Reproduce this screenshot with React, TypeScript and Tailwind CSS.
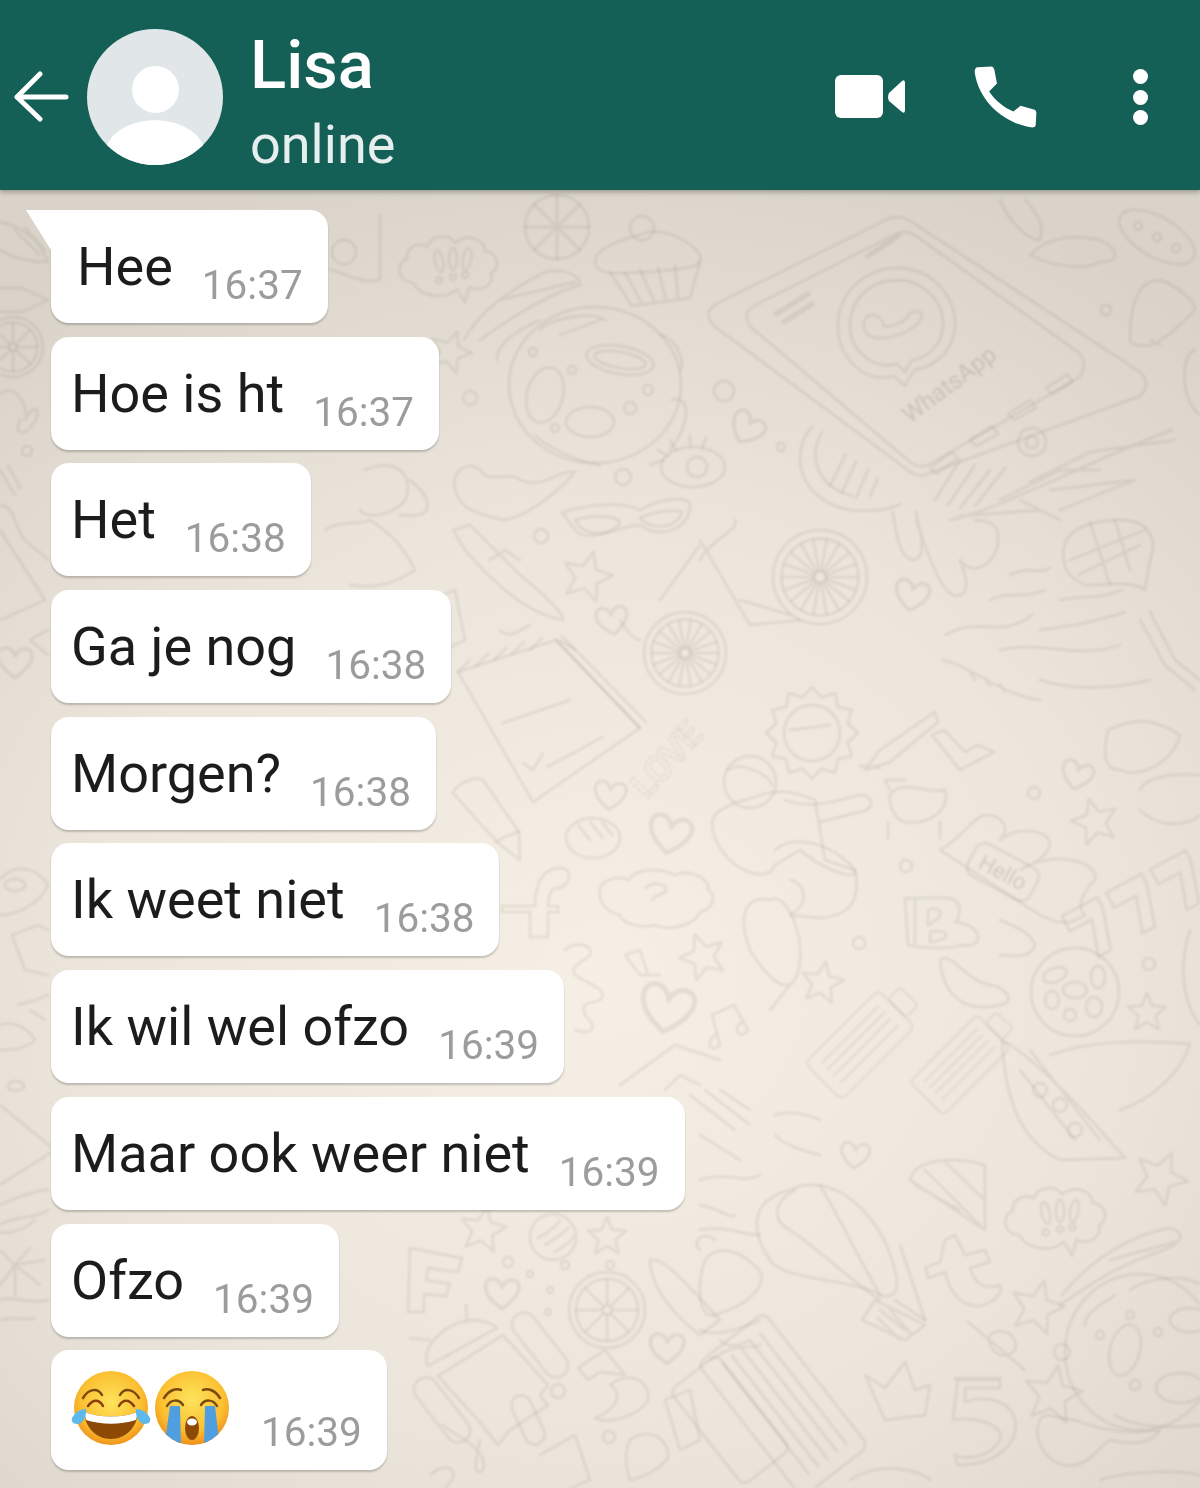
const messages = [
  { text: 'Hee', time: '16:37', pl: 'pl-[26px] rounded-tl-none' },
  { text: 'Hoe is ht', time: '16:37', pl: 'pl-[20px]' },
  { text: 'Het', time: '16:38', pl: 'pl-[20px]' },
  { text: 'Ga je nog', time: '16:38', pl: 'pl-[20px]' },
  { text: 'Morgen?', time: '16:38', pl: 'pl-[20px]' },
  { text: 'Ik weet niet', time: '16:38', pl: 'pl-[20px]' },
  { text: 'Ik wil wel ofzo', time: '16:39', pl: 'pl-[20px]' },
  { text: 'Maar ook weer niet', time: '16:39', pl: 'pl-[20px]' },
  { text: 'Ofzo', time: '16:39', pl: 'pl-[20px]' },
];

function Star({ x, y, r, rot = 0, n = 5, inner = 0.45 }: { x: number; y: number; r: number; rot?: number; n?: number; inner?: number }) {
  const pts = Array.from({ length: n * 2 }, (_, i) => {
    const a = ((i * (180 / n) + rot - 90) * Math.PI) / 180;
    const d = i % 2 ? r * inner : r;
    return `${(x + Math.cos(a) * d).toFixed(1)},${(y + Math.sin(a) * d).toFixed(1)}`;
  });
  return <polygon points={pts.join(' ')} strokeLinejoin="round" />;
}

function Heart({ x, y, s = 1, rot = 0 }: { x: number; y: number; s?: number; rot?: number }) {
  return (
    <path
      transform={`translate(${x} ${y}) rotate(${rot}) scale(${s})`}
      d="M0 12C-18 0-14-12-6-11-2-10 0-6 0-4 1-7 4-11 9-10 16-8 15 2 0 12Z"
    />
  );
}

function Wheel({ x, y, r, n = 16 }: { x: number; y: number; r: number; n?: number }) {
  return (
    <g>
      <circle cx={x} cy={y} r={r} />
      <circle cx={x} cy={y} r={r * 0.82} />
      <circle cx={x} cy={y} r={r * 0.12} />
      {Array.from({ length: n }, (_, i) => {
        const a = (i * 2 * Math.PI) / n;
        return (
          <line
            key={i}
            x1={x + Math.cos(a) * r * 0.14}
            y1={y + Math.sin(a) * r * 0.14}
            x2={x + Math.cos(a) * r * 0.8}
            y2={y + Math.sin(a) * r * 0.8}
          />
        );
      })}
    </g>
  );
}

function Cloud({ x, y, s = 1 }: { x: number; y: number; s?: number }) {
  return (
    <g transform={`translate(${x} ${y}) scale(${s})`}>
      <path d="M-40 20C-56 18-58 0-46-4-48-16-32-22-26-16-22-28-4-30 2-20 14-30 32-24 32-12 46-10 48 6 38 10 42 24 24 30 16 24L12 40 4 26C-6 36-30 36-40 20Z" />
      <ellipse cx="-14" cy="-2" rx="4" ry="11" transform="rotate(-12 -14 -2)" />
      <ellipse cx="0" cy="-4" rx="4" ry="11" />
      <ellipse cx="14" cy="-4" rx="4" ry="11" transform="rotate(10 14 -4)" />
      <circle cx="-14" cy="17" r="3" />
      <circle cx="0" cy="14" r="3" />
      <circle cx="12" cy="12" r="3" />
    </g>
  );
}

function Squeeze({ x, y, rot, s = 1 }: { x: number; y: number; rot: number; s?: number }) {
  return (
    <g transform={`translate(${x} ${y}) rotate(${rot}) scale(${s})`}>
      <rect x="-36" y="-72" width="72" height="144" rx="8" />
      <rect x="-18" y="-96" width="36" height="24" rx="6" />
      <path d="M-20-56V56M-8-56V56M4-56V56M18-56V56" />
    </g>
  );
}

// Faint wallpaper drawing, coordinates are page pixels
function Doodles() {
  return (
    <svg
      className="absolute inset-0 blur-[1px]"
      width="1200"
      height="1488"
      viewBox="0 0 1200 1488"
      fill="none"
      stroke="#6f6455"
      strokeOpacity="0.12"
      strokeWidth="2.4"
      strokeLinecap="round"
      strokeLinejoin="round"
    >
      {/* phone */}
      <path d="M882 222Q897 212 912 222L1140 372Q1152 384 1140 396L932 472Q920 480 908 470L714 326Q702 313 716 304Z" />
      <path d="M892 236Q904 228 916 236L1078 352Q1090 364 1078 378L930 464Q920 470 910 462L752 328Q740 314 754 306Z" />
      <path d="M868 256L898 236M776 314L808 294M784 322L812 304" strokeWidth="5" />
      <path d="M905 386L894 376C862 384 838 356 838 326 838 292 866 268 897 268 930 268 956 294 955 326 954 354 930 368 914 370Z" />
      <path d="M905 372L897 364C872 370 850 350 850 326 850 298 872 280 897 280 922 280 944 300 943 326 942 346 926 358 912 360Z" />
      <path d="M866 318C860 328 866 338 880 338 900 338 920 326 922 316 922 310 912 310 908 316 906 322 890 328 884 326 882 318 874 310 866 318Z" />
      <text x="0" y="0" transform="translate(910 424) rotate(-37)" fontSize="24" fontFamily="Roboto, sans-serif" fill="#6f6455" fillOpacity="0.2" stroke="none">WhatsApp</text>
      <path d="M930 468L952 452 958 458 936 474ZM970 440L992 426 998 434 976 446ZM1008 414L1030 400 1036 408 1014 420ZM1046 388L1068 374 1072 382 1052 394Z" />
      <circle cx="1032" cy="442" r="14" />
      <circle cx="1032" cy="442" r="6" />
      {/* wing and sprig */}
      <path d="M812 427C790 450 796 500 850 510 870 512 890 510 900 504M822 432C808 456 816 486 852 496" />
      <path d="M830 486L846 454M842 492L856 462M856 498L868 470M870 496L878 478" />
      <path d="M950 520C1000 510 1090 460 1172 430M1000 500L1060 470 1100 470M1030 482L1090 452 1175 440M960 516L1040 510 1060 520 1020 500M1050 490L1135 480 1060 510" />
      <path d="M935 500L960 460M948 505L975 465M960 508L990 470M975 506L1005 468" />
      <path d="M893 512C896 535 900 560 915 560 926 556 922 540 916 512M916 520C930 560 940 590 955 596 970 596 968 580 960 560 975 580 998 560 998 540 1000 525 990 520 975 520" />
      <Wheel x={820} y={577} r={47} n={18} />
      <Wheel x={685} y={653} r={41} n={18} />
      <path d="M700 560C710 540 740 530 735 520M740 600L790 615M700 540L750 625 800 620M700 545L660 600" />
      <Heart x={912} y={595} s={1.3} rot={10} />
      <Heart x={747} y={428} s={1.3} rot={30} />
      <circle cx="724" cy="391" r="10" />
      <circle cx="781" cy="447" r="4" />
      <circle cx="1106" cy="310" r="5" />
      <path d="M1064 560C1058 530 1090 520 1120 520 1150 520 1158 540 1150 560L1145 590C1130 580 1110 585 1085 585 1075 580 1065 575 1064 560Z" />
      <path d="M1070 560L1145 530M1078 575L1140 545M1090 522L1110 585M1115 520L1130 570" />
      <path d="M1010 575C1030 565 1040 575 1050 568M990 600C1010 590 1020 600 1045 590M1060 600C1080 595 1100 600 1122 590M945 635C980 615 1000 640 1032 615M1040 630C1080 625 1100 620 1125 612M1000 650C1040 640 1080 660 1120 645" />
      <path d="M1140 620L1165 665M1150 612L1175 660M1165 665L1195 690M1175 660L1200 680" />
      <path d="M942 660C970 665 1000 695 1040 700M970 672L975 680M985 678L990 686M1000 684L1005 692M1040 680C1070 690 1110 690 1150 680" />
      {/* top right */}
      <path d="M1000 200C1010 225 1030 240 1040 240 1045 225 1035 210 1025 200M1030 255C1050 235 1075 235 1100 240 1120 250 1120 262 1100 262 1090 268 1060 270 1030 255Z" />
      <g transform="rotate(30 1157 237)">
        <ellipse cx="1157" cy="237" rx="42" ry="20" />
        <circle cx="1135" cy="237" r="4" />
        <circle cx="1157" cy="237" r="4" />
        <circle cx="1179" cy="237" r="4" />
      </g>
      <path d="M1130 340C1130 300 1140 280 1160 280 1175 285 1195 300 1195 310 1180 325 1170 335 1160 340 1150 350 1130 345 1130 340ZM1150 340L1160 345" />
      <path d="M1195 350C1180 355 1180 400 1200 415" />
      {/* cupcake, lemon, clouds */}
      <circle cx="557" cy="227" r="32" />
      <path d="M557 195V259M525 227H589M534 204L580 250M580 204L534 250" />
      <path d="M596 265C590 250 620 240 640 235 660 225 690 240 700 255 705 270 680 268 650 272 630 272 600 278 596 265Z" />
      <path d="M610 272L632 306 690 298 700 262M625 272L642 304M640 270L655 303M658 268L666 300M675 265L678 298" />
      <circle cx="642" cy="228" r="12" />
      <Cloud x={453} y={263} s={1} />
      <path d="M464 340C480 310 510 290 545 272 565 268 580 275 580 285 560 290 520 310 480 340M500 300L575 282" />
      <Star x={450} y={352} r={22} rot={20} />
      <path d="M380 215V280C360 285 340 270 330 270" />
      <circle cx="344" cy="252" r="12" />
      {/* moon ball */}
      <ellipse cx="595" cy="385" rx="86" ry="78" />
      <ellipse cx="620" cy="360" rx="34" ry="14" transform="rotate(10 620 360)" />
      <ellipse cx="620" cy="360" rx="26" ry="8" transform="rotate(10 620 360)" />
      <ellipse cx="545" cy="395" rx="18" ry="28" transform="rotate(15 545 395)" />
      <ellipse cx="590" cy="422" rx="24" ry="15" />
      <path d="M497 360C495 340 530 325 540 320M540 330C545 320 590 310 605 320M600 320L560 335M660 335C680 340 685 365 680 370M672 400C690 395 692 420 670 450M535 435C550 450 580 462 600 465" />
      <circle cx="533" cy="352" r="4" />
      <circle cx="572" cy="370" r="4" />
      <circle cx="630" cy="408" r="6" />
      <circle cx="648" cy="390" r="5" />
      <circle cx="470" cy="398" r="7" />
      <circle cx="555" cy="428" r="4" />
      {/* eye, glasses, knife */}
      <ellipse cx="693" cy="467" rx="32" ry="20" />
      <circle cx="697" cy="467" r="10" />
      <path d="M650 465L664 460M658 450L668 456M670 440L676 450M690 436V446M706 438L702 448" />
      <circle cx="623" cy="477" r="8" />
      <path d="M562 512C590 505 620 500 640 510 660 498 690 495 690 505 690 530 660 540 640 525 620 525 590 545 575 530Z" />
      <path d="M575 520C590 515 615 515 620 522 615 535 585 540 575 520ZM640 518C655 510 680 510 682 512 676 530 650 530 640 518Z" />
      <path d="M453 530L470 525 520 575C545 595 565 615 563 620 530 615 495 585 465 550ZM490 560L505 550 520 560" />
      <Star x={587} y={577} r={26} rot={15} />
      <Heart x={612} y={620} s={1.2} rot={-10} />
      <circle cx="541" cy="536" r="7" />
      <path d="M500 630C510 640 520 630 530 625M560 640L575 650M620 620C625 630 635 640 640 640" />
      {/* notepad and pencil */}
      <path d="M458 672L556 640 640 728 533 802Z" />
      <path d="M458 672L470 660M476 666L488 654M494 660L506 648M512 654L524 642M530 650L542 638M556 640L640 728M562 636L646 722" />
      <path d="M503 723L570 700M547 767L603 737M523 763L533 770 543 753" />
      <path d="M453 793C455 785 475 775 483 780L519 832 520 860 497 842Z" />
      <path d="M497 842C505 835 510 835 519 832" />
      <text x="0" y="0" transform="translate(647 800) rotate(-48)" fontSize="36" fontFamily="Roboto, sans-serif" fontWeight="700" stroke="#6f6455" strokeOpacity="0.11" strokeWidth="1.6" fill="none" strokeDasharray="3 3">LOVE</text>
      <Heart x={610} y={795} s={1.2} rot={5} />
      <ellipse cx="593" cy="838" rx="27" ry="20" />
      <path d="M578 825L590 840M590 822L603 838M602 822L612 835" />
      <Heart x={670} y={834} s={1.6} rot={10} />
      <path d="M522 906H535C535 880 545 868 560 868 575 868 570 890 555 888 550 890 548 900 548 906H558V912H548V937H530V912H502V906Z" />
      <path d="M600 890C600 880 620 875 628 880 640 865 665 870 675 875 690 868 712 880 708 890 718 895 712 910 700 912 695 925 670 932 655 925 635 930 620 920 620 915 605 912 598 900 600 890Z" />
      <path d="M645 888C655 880 670 885 665 892 660 896 655 895 652 900" />
      <path d="M565 950C575 940 595 945 590 955 580 965 570 965 575 975 590 985 610 990 600 1000 590 1005 580 1000 585 1015 600 1030 590 1035 575 1030" />
      <path d="M625 955L640 950 648 975H660L640 975Z" />
      <Star x={703} y={957} r={24} rot={-20} />
      <Heart x={667} y={1008} s={2} rot={10} />
      <path d="M620 1085L675 1045 720 1060M665 1090L680 1075 700 1085" />
      {/* left of chat between bubbles */}
      <path d="M365 470C400 455 415 480 405 500 395 515 365 520 360 510M410 480C435 500 435 520 400 515" />
      <path d="M455 490C450 470 470 460 480 470 490 485 510 470 520 480 545 490 555 470 575 472 560 490 530 515 505 520 480 515 460 510 455 490Z" />
      <path d="M325 530C340 520 360 525 370 520 385 530 400 540 415 570 400 580 380 590 350 585" />
      <path d="M430 600L455 590 465 640 445 650Z" />
      {/* astronaut, sun, middle */}
      <circle cx="750" cy="782" r="26" />
      <path d="M728 770C740 760 770 775 772 785" />
      <path d="M725 808C705 815 710 840 730 860 745 875 770 880 775 865L800 850C830 875 860 880 855 870L825 860 815 800C790 790 780 790 760 795 750 800 735 800 725 808Z" />
      <path d="M785 800C810 810 840 800 860 795 875 795 875 810 860 812L820 822M775 850C790 835 830 840 855 870 860 895 855 915 820 918L790 915C815 900 800 880 790 880" />
      <Star x={812} y={733} r={46} n={12} inner={0.8} />
      <circle cx="812" cy="733" r="28" />
      <path d="M790 730L830 725M865 770L880 750 935 712 938 722 890 762ZM860 766L880 768" />
      <path d="M932 735L960 770 994 752 978 745 965 752 944 730Z" />
      <path d="M892 792C905 780 930 795 945 790 950 810 930 825 905 822 895 820 885 800 892 792ZM890 790L885 780 905 780M888 822V838M940 822V838" />
      <Star x={1095} y={822} r={24} rot={-15} />
      <Heart x={1077} y={775} s={1.2} rot={15} />
      <path d="M1108 730C1130 720 1150 715 1180 735 1175 760 1140 780 1120 770 1100 770 1105 745 1108 730Z" />
      <path d="M1140 790C1150 770 1200 775 1200 775M1140 810C1160 830 1190 825 1200 815" />
      <circle cx="1034" cy="793" r="6" />
      <circle cx="906" cy="866" r="6" />
      <circle cx="859" cy="943" r="6" />
      <path d="M940 850C960 840 975 815 985 815 1005 815 1010 830 1000 840 1020 825 1050 830 1050 845 1045 860 1030 865 1020 870 1050 850 1100 860 1095 880 1085 890 1075 905 1085 915 1070 925 1060 925 1040 915Z" />
      <g transform="translate(1003 872) rotate(28)">
        <rect x="-35" y="-18" width="70" height="36" rx="10" />
        <text textAnchor="middle" y="8" fontSize="22" fontFamily="Roboto, sans-serif" fill="#6f6455" fillOpacity="0.2" stroke="none">Hello</text>
      </g>
      <path d="M905 898H945C965 898 960 920 955 922 985 925 985 950 960 945 950 950 920 948 908 945ZM928 910C940 905 948 915 928 925ZM930 932C945 928 958 938 930 942ZM915 898V945" />
      <g transform="translate(1140 903) rotate(-28)">
        <path d="M-75-8V-25H-35V-14L-48 28H-62L-50-8ZM-25-8V-25H15V-14L2 28H-12L0-8ZM25-8V-25H65V-14L52 28H38L50-8Z" />
      </g>
      <path d="M770 900C790 890 810 950 795 980 785 995 765 975 750 950 735 910 750 895 770 900ZM790 985L770 1010" />
      <Star x={822} y={983} r={22} rot={10} />
      <path d="M720 1045L712 1015 734 1005 748 1030M720 1045C710 1055 705 1040 716 1035M748 1030C742 1040 730 1030 742 1022" />
      <path d="M940 960C950 950 965 980 990 985 1000 985 1020 1000 1000 1005 980 1010 945 1010 940 960ZM1000 920C1010 925 1030 930 1035 945 1030 960 1010 955 1000 955" />
      <circle cx="1075" cy="992" r="44" />
      <ellipse cx="1075" cy="990" rx="12" ry="8" />
      <ellipse cx="1055" cy="975" rx="12" ry="7" transform="rotate(-20 1055 975)" />
      <ellipse cx="1098" cy="977" rx="7" ry="11" />
      <ellipse cx="1094" cy="1007" rx="8" ry="10" />
      <ellipse cx="1052" cy="1000" rx="7" ry="9" />
      <circle cx="1070" cy="1015" r="6" />
      <Star x={1147} y={1013} r={20} rot={0} />
      <circle cx="1149" cy="964" r="6" />
      <path d="M1190 930C1180 960 1180 1000 1200 1025" />
      <Squeeze x={860} y={1045} rot={45} s={0.72} />
      <Squeeze x={960} y={1065} rot={45} s={0.66} />
      <path d="M1002 1040C1040 1060 1100 1130 1125 1158L1060 1160C1020 1140 1005 1100 1002 1040ZM1030 1050L1100 1140M1020 1070L1075 1140" />
      <path d="M1050 1055C1090 1040 1140 1040 1190 1044 1180 1075 1150 1100 1120 1110" />
      <circle cx="1040" cy="1090" r="7" />
      <circle cx="1060" cy="1105" r="7" />
      <circle cx="1075" cy="1130" r="7" />
      {/* lower middle */}
      <path d="M700 1135L740 1160M775 1115C790 1110 810 1115 820 1120M775 1135C785 1145 800 1150 820 1155" />
      <path d="M690 1095L735 1130M705 1090L750 1125M720 1090L750 1110" />
      <Heart x={855} y={1155} s={1.1} rot={5} />
      <path d="M700 1180C730 1170 740 1185 760 1175M700 1205C725 1210 730 1220 735 1215" />
      {/* balloon */}
      <path d="M880 1295C860 1280 780 1280 770 1260 750 1230 750 1200 790 1190 830 1170 880 1210 895 1270 900 1290 895 1300 880 1295Z" />
      <path d="M795 1190C775 1200 770 1220 790 1230 820 1250 850 1280 880 1300M820 1185C835 1210 860 1260 880 1295" />
      <path d="M875 1300L925 1325 905 1340 862 1320ZM890 1310L912 1335M878 1318L900 1340M895 1300L925 1320M880 1310L905 1330" />
      <path d="M900 1245L925 1320" />
      <path d="M910 1180C915 1160 950 1155 985 1165L985 1230ZM925 1170L980 1225M945 1162L985 1200M915 1185L960 1210" />
      <Cloud x={1060} y={1215} s={1.02} />
      <Star x={1160} y={1178} r={28} rot={25} />
      <path d="M945 1240L955 1235 965 1255 985 1250 990 1262 970 1268C975 1285 985 1290 1000 1285 1005 1295 985 1310 970 1305 955 1300 948 1285 945 1272L928 1278 925 1268 940 1262Z" />
      <Star x={1037} y={1308} r={28} rot={15} />
      <path d="M1062 1295C1090 1260 1130 1235 1170 1228 1190 1235 1180 1245 1150 1255 1110 1270 1090 1285 1060 1305M1110 1260L1175 1242" />
      <path d="M968 1322L1025 1370M990 1335C1000 1325 1020 1335 1015 1350 1000 1365 985 1345 990 1335Z" />
      <circle cx="1062" cy="1352" r="8" />
      <ellipse cx="1140" cy="1352" rx="75" ry="78" />
      <ellipse cx="1125" cy="1350" rx="15" ry="26" transform="rotate(15 1125 1350)" />
      <ellipse cx="1180" cy="1388" rx="24" ry="15" />
      <ellipse cx="1190" cy="1320" rx="20" ry="12" />
      <circle cx="1100" cy="1335" r="4" />
      <circle cx="1130" cy="1315" r="4" />
      <circle cx="1158" cy="1332" r="4" />
      <circle cx="1135" cy="1385" r="5" />
      <path d="M1085 1325C1085 1310 1110 1300 1115 1295M1130 1290C1150 1275 1190 1275 1200 1285M1115 1415C1130 1425 1160 1430 1200 1425" />
      <path d="M955 1378V1380H1000M958 1378L953 1420C985 1415 1005 1430 1000 1440 990 1458 965 1460 955 1455L958 1465C1000 1465 1020 1440 1015 1420 1010 1400 985 1395 965 1402V1388H1000V1378Z" />
      <Star x={1053} y={1395} r={30} rot={10} />
      <path d="M1040 1420C1030 1440 1050 1470 1075 1465 1095 1460 1100 1445 1110 1440 1130 1445 1150 1445 1160 1430 1130 1435 1100 1430 1075 1420 1060 1420 1045 1410 1040 1420Z" />
      <path d="M865 1375L885 1388 905 1362 915 1390 930 1385 925 1415 885 1420Z" />
      <g transform="translate(783 1405) rotate(-38)">
        <rect x="-42" y="-85" width="84" height="170" rx="8" />
        <path d="M-22-70V70M-10-70V70M2-70V70M14-70V70M26-70V70" />
      </g>
      <g transform="translate(730 1420) rotate(-38)">
        <rect x="-30" y="-60" width="60" height="120" rx="8" />
      </g>
      <path d="M705 1260C720 1240 750 1255 762 1275 760 1300 730 1310 715 1315 700 1320 695 1290 705 1260ZM700 1330C720 1340 760 1320 760 1320" />
      <path d="M700 1230C730 1225 740 1235 760 1235M720 1340C730 1350 740 1345 750 1340M710 1360C740 1340 750 1350 760 1345" />
      <path d="M700 1250C690 1240 705 1230 715 1240" />
      <path d="M1100 1480C1130 1470 1180 1470 1200 1475M850 1480C880 1460 920 1470 930 1480" />
      {/* android, wheel, bottom */}
      <path d="M428 1366C420 1350 440 1325 470 1320 485 1320 495 1325 497 1328ZM410 1338L430 1340M467 1322L466 1305" />
      <path d="M438 1376L503 1335 548 1385 540 1395 548 1405 510 1430 498 1445 478 1420Z" />
      <rect x="-12" y="-38" width="24" height="76" rx="12" transform="translate(540 1345) rotate(-38)" />
      <rect x="-12" y="-38" width="24" height="76" rx="12" transform="translate(442 1410) rotate(-38)" />
      <rect x="-10" y="-26" width="20" height="52" rx="10" transform="translate(528 1420) rotate(-25)" />
      <circle cx="558" cy="1391" r="7" />
      <Wheel x={607} y={1310} r={38} n={8} />
      <Star x={483} y={1230} r={24} rot={10} />
      <Star x={607} y={1237} r={20} rot={0} />
      <Heart x={502} y={1293} s={1.3} rot={0} />
      <Heart x={667} y={1348} s={1.3} rot={0} />
      <circle cx="553" cy="1237" r="23" />
      <path d="M538 1238C550 1232 558 1224 560 1220M545 1245C556 1238 565 1232 568 1228M555 1252C565 1246 572 1240 574 1236" />
      <path d="M410 1248L462 1258 458 1272 428 1268 426 1280 450 1284 446 1296 424 1294 424 1312 408 1312Z" />
      <circle cx="508" cy="1262" r="5" />
      <circle cx="565" cy="1265" r="4" />
      <circle cx="610" cy="1265" r="4" />
      <circle cx="530" cy="1274" r="3" />
      <circle cx="550" cy="1290" r="3" />
      <circle cx="548" cy="1312" r="3" />
      <path d="M650 1260C665 1255 700 1300 720 1320L700 1335C680 1320 650 1290 650 1260Z" />
      <path d="M578 1368L605 1350 625 1375 600 1372 588 1380ZM610 1385C630 1370 650 1380 648 1400 640 1415 610 1425 595 1418 615 1410 625 1395 610 1385Z" />
      <circle cx="609" cy="1437" r="6" />
      <path d="M540 1455L575 1435 590 1480 570 1488M665 1400L690 1390 700 1440 680 1450Z" />
      <path d="M630 1440C650 1425 670 1440 668 1458 660 1470 640 1478 630 1480 625 1465 625 1450 630 1440Z" />
      <path d="M442 1425C455 1435 490 1450 483 1470 470 1480 478 1450 480 1440M430 1475C445 1460 465 1470 445 1488" />
      {/* far left strip */}
      <path d="M0 222C20 225 40 240 48 262M0 250C20 262 40 262 48 262M15 230L40 255M25 228L45 250" />
      <path d="M0 288H22L48 300 22 312H0" />
      <Wheel x={13} y={347} r={30} n={8} />
      <path d="M0 395C15 378 30 410 25 420 35 400 45 410 30 428 20 438 15 430 20 420" />
      <circle cx="27" cy="451" r="5" />
      <path d="M0 470L15 495M8 465L20 488M0 505C15 505 15 530 25 540 35 550 45 555 48 560" />
      <path d="M0 530L45 600 0 620" />
      <path d="M30 640L48 630M30 640L48 655" />
      <Heart x={15} y={662} s={1.3} />
      <path d="M0 880C15 860 40 870 48 885 40 905 15 915 0 915" />
      <ellipse cx="15" cy="885" rx="10" ry="6" />
      <path d="M12 935L25 970 48 975M12 935L38 925 48 930" />
      <path d="M18 1005L35 1000 48 995M30 1010L45 1020" />
      <path d="M0 1025C15 1020 30 1030 35 1040 25 1050 10 1050 0 1050" />
      <ellipse cx="16" cy="1086" rx="8" ry="5" />
      <path d="M0 1105L55 1150 0 1185" />
      <path d="M0 1205C20 1195 40 1190 48 1190M0 1225C15 1215 35 1220 48 1210M0 1232C15 1235 30 1225 35 1220" />
      <path d="M15 1265L0 1250M15 1265L30 1248M15 1265L45 1260M15 1265L40 1285M15 1265L15 1295M15 1265L0 1285" />
      <path d="M0 1300C15 1295 30 1305 48 1300M0 1320C15 1315 30 1322 35 1318" />
    </svg>
  );
}

function LaughEmoji() {
  return (
    <svg width="80" height="80" viewBox="0 0 80 80" className="shrink-0 overflow-visible">
      <defs>
        <radialGradient id="face1" cx="50%" cy="42%" r="60%">
          <stop offset="0%" stopColor="#fde35c" />
          <stop offset="70%" stopColor="#fbbf30" />
          <stop offset="100%" stopColor="#ee8f1a" />
        </radialGradient>
      </defs>
      <circle cx="40" cy="40" r="37" fill="url(#face1)" />
      <path d="M12 30C18 20 27 20 31 27M49 27C53 20 62 20 68 30" fill="none" stroke="#7a4a0c" strokeWidth="2.5" strokeLinecap="round" />
      <path d="M17 38C22 31 28 31 32 38M48 38C52 31 58 31 63 38" fill="none" stroke="#8a3d08" strokeWidth="2.5" strokeLinecap="round" />
      <path d="M13 44C30 50 50 50 67 44 66 60 54 71 40 71 26 71 14 60 13 44Z" fill="#8d4a06" />
      <path d="M13 44C30 50 50 50 67 44L65 52C48 57 32 57 15 52Z" fill="#ffffff" />
      <path d="M1 50C4 44 10 41 15 41 16 48 12 56 6 56 2 56 0 53 1 50Z" fill="#5db8ec" />
      <path d="M79 50C76 44 70 41 65 41 64 48 68 56 74 56 78 56 80 53 79 50Z" fill="#5db8ec" />
    </svg>
  );
}

function CryEmoji() {
  return (
    <svg width="80" height="80" viewBox="0 0 80 80" className="shrink-0 overflow-visible">
      <defs>
        <radialGradient id="face2" cx="50%" cy="38%" r="62%">
          <stop offset="0%" stopColor="#fde35c" />
          <stop offset="70%" stopColor="#fbbf30" />
          <stop offset="100%" stopColor="#ee8f1a" />
        </radialGradient>
        <clipPath id="face2clip">
          <circle cx="40" cy="40" r="37" />
        </clipPath>
      </defs>
      <circle cx="40" cy="40" r="37" fill="url(#face2)" />
      <path d="M12 30C17 22 24 20 29 22M51 22C56 20 63 22 68 30" fill="none" stroke="#7a4a0c" strokeWidth="2.5" strokeLinecap="round" />
      <path d="M15 38C19 31 27 31 31 37M49 37C53 31 61 31 65 38" fill="none" stroke="#7a4a0c" strokeWidth="2.5" strokeLinecap="round" />
      <g clipPath="url(#face2clip)">
        <path d="M18 38H28L29 80H12Z" fill="#4f9fe0" />
        <path d="M53 38H63L68 80H52Z" fill="#4f9fe0" />
      </g>
      <ellipse cx="40" cy="60" rx="7" ry="12" fill="#8d4a06" />
      <ellipse cx="40" cy="54" rx="5" ry="3.5" fill="#ffffff" />
    </svg>
  );
}

export default function App() {
  return (
    <div className="relative h-[1488px] w-[1200px] overflow-hidden bg-[radial-gradient(ellipse_950px_850px_at_600px_980px,#f5efe5_0%,#ebe5db_55%,#d9d3c9_100%)] font-['Roboto',sans-serif]">
      <Doodles />

      <header className="relative flex h-[190px] items-center bg-[#145f56] pt-[4px] shadow-[0_2px_5px_rgba(0,0,0,0.3)]">
        <div className="flex items-center blur-[0.5px]">
          <svg width="56" height="56" viewBox="0 0 56 56" className="ml-[14px]" fill="none" stroke="#fff" strokeWidth="5" strokeLinecap="round" strokeLinejoin="round">
            <path d="M3 28H52M26 5L3 28 26 50" />
          </svg>
          <div className="relative ml-[17px] h-[136px] w-[136px] overflow-hidden rounded-full bg-[#e1e6e8]">
            <div className="mx-auto mt-[37px] h-[47px] w-[47px] rounded-full bg-white" />
            <div className="mx-auto mt-[7px] h-[70px] w-[100px] rounded-[50%] bg-white" />
          </div>
          <div className="mt-[10px] ml-[27px] flex flex-col">
            <span className="text-[67px] leading-[72px] font-medium text-white">Lisa</span>
            <span className="mt-[13.5px] text-[54px] leading-[60px] text-[#e6efed]">online</span>
          </div>
        </div>
        <div className="ml-auto flex items-center blur-[0.5px]">
          <svg width="70" height="44" viewBox="0 0 70 44" fill="#fff">
            <rect x="0" y="0" width="48" height="43" rx="6" />
            <path d="M54 18L67 6Q70 4 70 8V35Q70 39 67 37L54 26Q52 22 54 18Z" />
          </svg>
          <svg width="63" height="64" viewBox="520 105 192 192" fill="#fff" className="ml-[69px]">
            <path d="M530 110L575 108Q580 110 582 118L590 160 566 184C585 212 610 232 640 245L662 228 705 240Q710 242 710 250L708 288Q706 294 698 294C620 285 535 220 522 125Q522 112 530 110Z" />
          </svg>
          <div className="mr-[52px] ml-[96px] flex flex-col gap-[5.5px]">
            <span className="h-[15px] w-[15px] rounded-full bg-white" />
            <span className="h-[15px] w-[15px] rounded-full bg-white" />
            <span className="h-[15px] w-[15px] rounded-full bg-white" />
          </div>
        </div>
      </header>

      <main className="relative flex flex-col items-start gap-[13.7px] pt-[20px] pl-[51px] blur-[0.5px]">
        {/* staartje aan de eerste bubbel */}
        <svg className="absolute top-[20px] left-[26px]" width="26" height="40" viewBox="0 0 26 40" fill="#fff">
          <path d="M0 0H26V40H25Z" />
        </svg>
        {messages.map((m, i) => (
          <div key={i} className={`flex h-[113px] items-start rounded-[18px] bg-white pr-[25px] shadow-[0_2px_2px_rgba(0,0,0,0.2)] ${m.pl}`}>
            <span className="mt-[27px] text-[54px] leading-[60px] whitespace-nowrap text-[#1c1c1c]">{m.text}</span>
            <span className="mt-[51px] ml-[29px] text-[40.5px] leading-[48px] text-[#9c9c9c]">{m.time}</span>
          </div>
        ))}
        <div className="flex h-[120px] items-start rounded-[18px] bg-white pr-[25px] pl-[20px] shadow-[0_2px_2px_rgba(0,0,0,0.2)]">
          <div className="mt-[18px] flex gap-[1px]">
            <LaughEmoji />
            <CryEmoji />
          </div>
          <span className="mt-[58px] ml-[29px] text-[40.5px] leading-[48px] text-[#9c9c9c]">16:39</span>
        </div>
      </main>
    </div>
  );
}
